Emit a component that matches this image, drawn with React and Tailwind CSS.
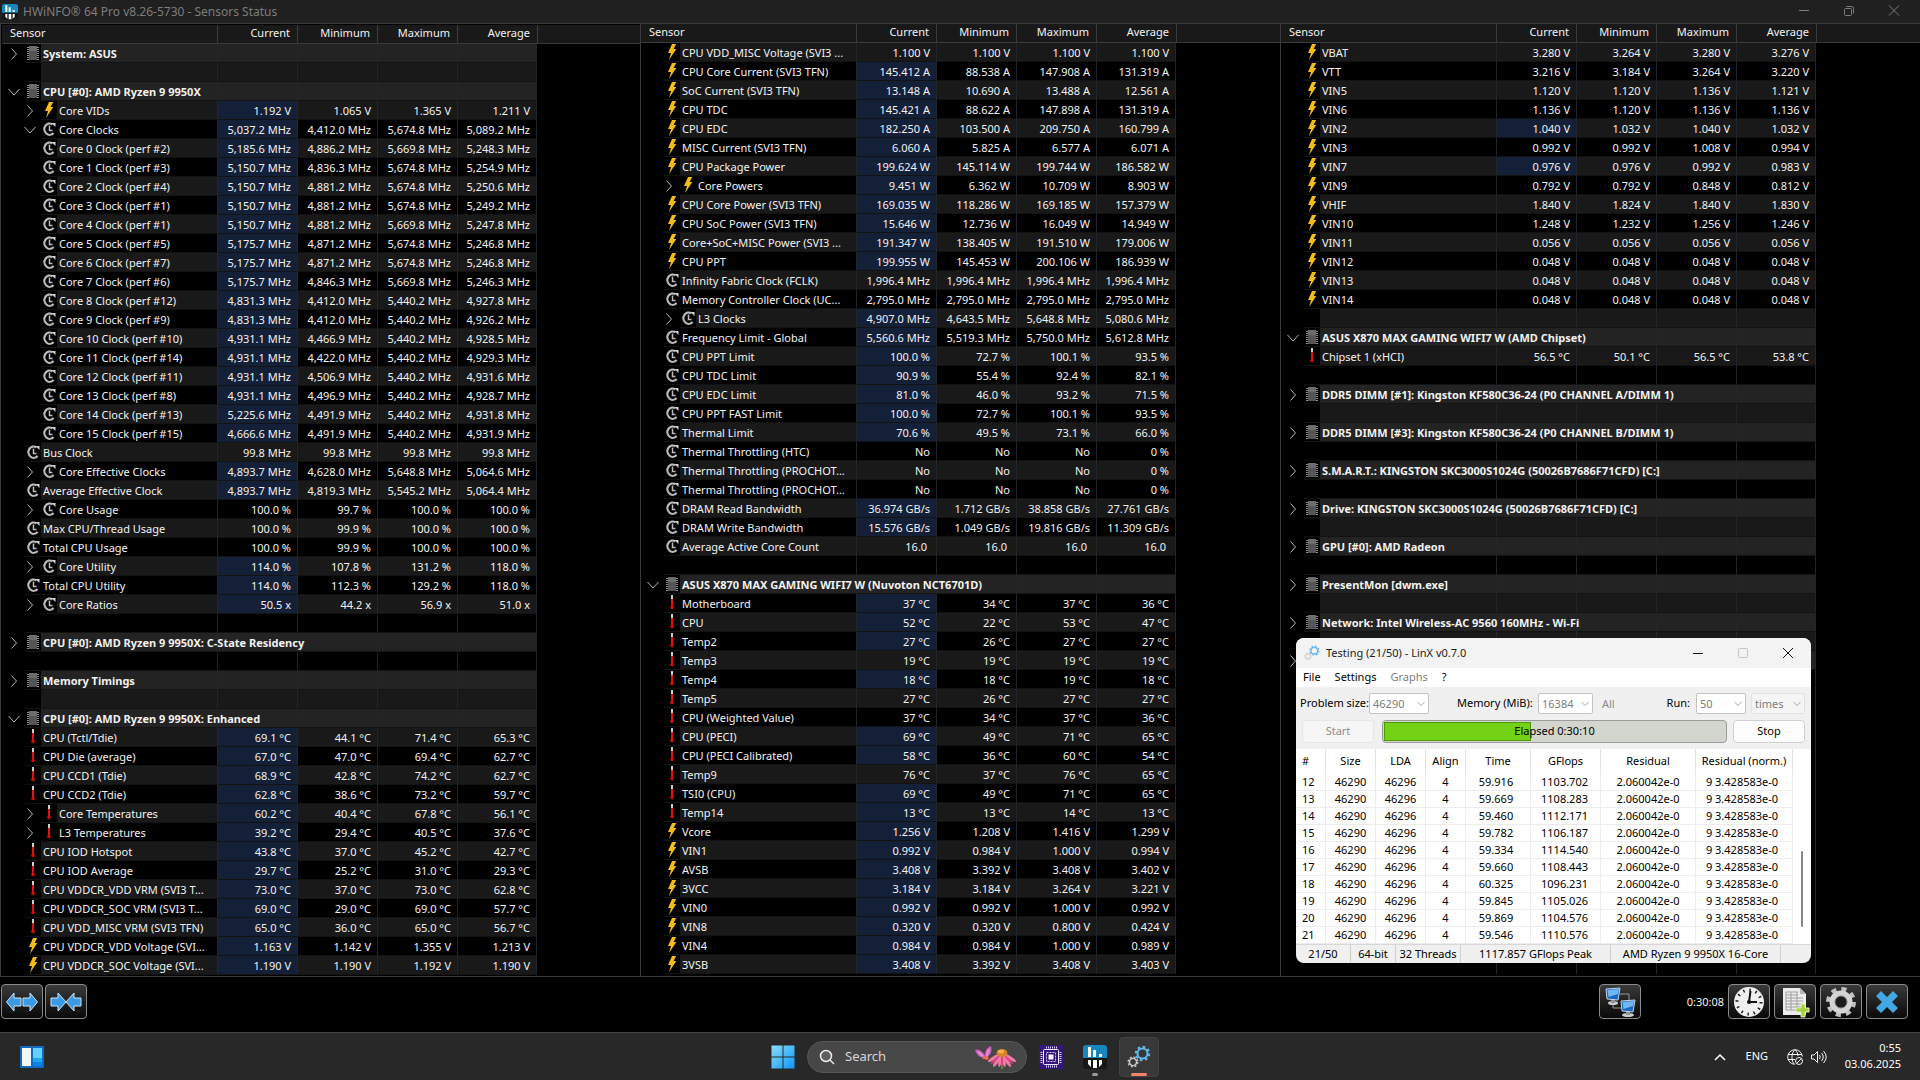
import { useState } from 'react';
import clsx from 'clsx';

// row: [icon, tree, highlighted, name, current, minimum, maximum, average]
// tree: '' leaf, '-' nested leaf, '>' closed group, 'v' open group
const LEFT = [
  { title: 'System: ASUS', gap: 'gray' },
  {
    title: 'CPU [#0]: AMD Ryzen 9 9950X',
    open: true,
    first: 'gray',
    gap: 'black',
    items: [
      ['volt', '>', 1, 'Core VIDs', '1.192 V', '1.065 V', '1.365 V', '1.211 V'],
      ['clock', 'v', 1, 'Core Clocks', '5,037.2 MHz', '4,412.0 MHz', '5,674.8 MHz', '5,089.2 MHz'],
      ['clock', '-', 1, 'Core 0 Clock (perf #2)', '5,185.6 MHz', '4,886.2 MHz', '5,669.8 MHz', '5,248.3 MHz'],
      ['clock', '-', 1, 'Core 1 Clock (perf #3)', '5,150.7 MHz', '4,836.3 MHz', '5,674.8 MHz', '5,254.9 MHz'],
      ['clock', '-', 1, 'Core 2 Clock (perf #4)', '5,150.7 MHz', '4,881.2 MHz', '5,674.8 MHz', '5,250.6 MHz'],
      ['clock', '-', 1, 'Core 3 Clock (perf #1)', '5,150.7 MHz', '4,881.2 MHz', '5,674.8 MHz', '5,249.2 MHz'],
      ['clock', '-', 1, 'Core 4 Clock (perf #1)', '5,150.7 MHz', '4,881.2 MHz', '5,669.8 MHz', '5,247.8 MHz'],
      ['clock', '-', 1, 'Core 5 Clock (perf #5)', '5,175.7 MHz', '4,871.2 MHz', '5,674.8 MHz', '5,246.8 MHz'],
      ['clock', '-', 1, 'Core 6 Clock (perf #7)', '5,175.7 MHz', '4,871.2 MHz', '5,674.8 MHz', '5,246.8 MHz'],
      ['clock', '-', 1, 'Core 7 Clock (perf #6)', '5,175.7 MHz', '4,846.3 MHz', '5,669.8 MHz', '5,246.3 MHz'],
      ['clock', '-', 1, 'Core 8 Clock (perf #12)', '4,831.3 MHz', '4,412.0 MHz', '5,440.2 MHz', '4,927.8 MHz'],
      ['clock', '-', 1, 'Core 9 Clock (perf #9)', '4,831.3 MHz', '4,412.0 MHz', '5,440.2 MHz', '4,926.2 MHz'],
      ['clock', '-', 1, 'Core 10 Clock (perf #10)', '4,931.1 MHz', '4,466.9 MHz', '5,440.2 MHz', '4,928.5 MHz'],
      ['clock', '-', 1, 'Core 11 Clock (perf #14)', '4,931.1 MHz', '4,422.0 MHz', '5,440.2 MHz', '4,929.3 MHz'],
      ['clock', '-', 1, 'Core 12 Clock (perf #11)', '4,931.1 MHz', '4,506.9 MHz', '5,440.2 MHz', '4,931.6 MHz'],
      ['clock', '-', 1, 'Core 13 Clock (perf #8)', '4,931.1 MHz', '4,496.9 MHz', '5,440.2 MHz', '4,928.7 MHz'],
      ['clock', '-', 1, 'Core 14 Clock (perf #13)', '5,225.6 MHz', '4,491.9 MHz', '5,440.2 MHz', '4,931.8 MHz'],
      ['clock', '-', 1, 'Core 15 Clock (perf #15)', '4,666.6 MHz', '4,491.9 MHz', '5,440.2 MHz', '4,931.9 MHz'],
      ['clock', '', 0, 'Bus Clock', '99.8 MHz', '99.8 MHz', '99.8 MHz', '99.8 MHz'],
      ['clock', '>', 1, 'Core Effective Clocks', '4,893.7 MHz', '4,628.0 MHz', '5,648.8 MHz', '5,064.6 MHz'],
      ['clock', '', 1, 'Average Effective Clock', '4,893.7 MHz', '4,819.3 MHz', '5,545.2 MHz', '5,064.4 MHz'],
      ['clock', '>', 0, 'Core Usage', '100.0 %', '99.7 %', '100.0 %', '100.0 %'],
      ['clock', '', 0, 'Max CPU/Thread Usage', '100.0 %', '99.9 %', '100.0 %', '100.0 %'],
      ['clock', '', 0, 'Total CPU Usage', '100.0 %', '99.9 %', '100.0 %', '100.0 %'],
      ['clock', '>', 1, 'Core Utility', '114.0 %', '107.8 %', '131.2 %', '118.0 %'],
      ['clock', '', 1, 'Total CPU Utility', '114.0 %', '112.3 %', '129.2 %', '118.0 %'],
      ['clock', '>', 1, 'Core Ratios', '50.5 x', '44.2 x', '56.9 x', '51.0 x'],
    ],
  },
  { title: 'CPU [#0]: AMD Ryzen 9 9950X: C-State Residency', gap: 'black' },
  { title: 'Memory Timings', gap: 'gray' },
  {
    title: 'CPU [#0]: AMD Ryzen 9 9950X: Enhanced',
    open: true,
    first: 'gray',
    items: [
      ['temp', '', 1, 'CPU (Tctl/Tdie)', '69.1 °C', '44.1 °C', '71.4 °C', '65.3 °C'],
      ['temp', '', 1, 'CPU Die (average)', '67.0 °C', '47.0 °C', '69.4 °C', '62.7 °C'],
      ['temp', '', 1, 'CPU CCD1 (Tdie)', '68.9 °C', '42.8 °C', '74.2 °C', '62.7 °C'],
      ['temp', '', 1, 'CPU CCD2 (Tdie)', '62.8 °C', '38.6 °C', '73.2 °C', '59.7 °C'],
      ['temp', '>', 1, 'Core Temperatures', '60.2 °C', '40.4 °C', '67.8 °C', '56.1 °C'],
      ['temp', '>', 1, 'L3 Temperatures', '39.2 °C', '29.4 °C', '40.5 °C', '37.6 °C'],
      ['temp', '', 1, 'CPU IOD Hotspot', '43.8 °C', '37.0 °C', '45.2 °C', '42.7 °C'],
      ['temp', '', 1, 'CPU IOD Average', '29.7 °C', '25.2 °C', '31.0 °C', '29.3 °C'],
      ['temp', '', 1, 'CPU VDDCR_VDD VRM (SVI3 T...', '73.0 °C', '37.0 °C', '73.0 °C', '62.8 °C'],
      ['temp', '', 1, 'CPU VDDCR_SOC VRM (SVI3 T...', '69.0 °C', '29.0 °C', '69.0 °C', '57.7 °C'],
      ['temp', '', 1, 'CPU VDD_MISC VRM (SVI3 TFN)', '65.0 °C', '36.0 °C', '65.0 °C', '56.7 °C'],
      ['volt', '', 1, 'CPU VDDCR_VDD Voltage (SVI...', '1.163 V', '1.142 V', '1.355 V', '1.213 V'],
      ['volt', '', 1, 'CPU VDDCR_SOC Voltage (SVI...', '1.190 V', '1.190 V', '1.192 V', '1.190 V'],
    ],
  },
];

const MIDDLE = [
  {
    first: 'gray',
    gap: 'black',
    items: [
      ['volt', '', 0, 'CPU VDD_MISC Voltage (SVI3 ...', '1.100 V', '1.100 V', '1.100 V', '1.100 V'],
      ['volt', '', 1, 'CPU Core Current (SVI3 TFN)', '145.412 A', '88.538 A', '147.908 A', '131.319 A'],
      ['volt', '', 1, 'SoC Current (SVI3 TFN)', '13.148 A', '10.690 A', '13.488 A', '12.561 A'],
      ['volt', '', 1, 'CPU TDC', '145.421 A', '88.622 A', '147.898 A', '131.319 A'],
      ['volt', '', 1, 'CPU EDC', '182.250 A', '103.500 A', '209.750 A', '160.799 A'],
      ['volt', '', 1, 'MISC Current (SVI3 TFN)', '6.060 A', '5.825 A', '6.577 A', '6.071 A'],
      ['volt', '', 1, 'CPU Package Power', '199.624 W', '145.114 W', '199.744 W', '186.582 W'],
      ['volt', '>', 1, 'Core Powers', '9.451 W', '6.362 W', '10.709 W', '8.903 W'],
      ['volt', '', 1, 'CPU Core Power (SVI3 TFN)', '169.035 W', '118.286 W', '169.185 W', '157.379 W'],
      ['volt', '', 1, 'CPU SoC Power (SVI3 TFN)', '15.646 W', '12.736 W', '16.049 W', '14.949 W'],
      ['volt', '', 1, 'Core+SoC+MISC Power (SVI3 ...', '191.347 W', '138.405 W', '191.510 W', '179.006 W'],
      ['volt', '', 1, 'CPU PPT', '199.955 W', '145.453 W', '200.106 W', '186.939 W'],
      ['clock', '', 0, 'Infinity Fabric Clock (FCLK)', '1,996.4 MHz', '1,996.4 MHz', '1,996.4 MHz', '1,996.4 MHz'],
      ['clock', '', 0, 'Memory Controller Clock (UC...', '2,795.0 MHz', '2,795.0 MHz', '2,795.0 MHz', '2,795.0 MHz'],
      ['clock', '>', 1, 'L3 Clocks', '4,907.0 MHz', '4,643.5 MHz', '5,648.8 MHz', '5,080.6 MHz'],
      ['clock', '', 1, 'Frequency Limit - Global', '5,560.6 MHz', '5,519.3 MHz', '5,750.0 MHz', '5,612.8 MHz'],
      ['clock', '', 1, 'CPU PPT Limit', '100.0 %', '72.7 %', '100.1 %', '93.5 %'],
      ['clock', '', 1, 'CPU TDC Limit', '90.9 %', '55.4 %', '92.4 %', '82.1 %'],
      ['clock', '', 1, 'CPU EDC Limit', '81.0 %', '46.0 %', '93.2 %', '71.5 %'],
      ['clock', '', 1, 'CPU PPT FAST Limit', '100.0 %', '72.7 %', '100.1 %', '93.5 %'],
      ['clock', '', 1, 'Thermal Limit', '70.6 %', '49.5 %', '73.1 %', '66.0 %'],
      ['clock', '', 0, 'Thermal Throttling (HTC)', 'No', 'No', 'No', '0 %'],
      ['clock', '', 0, 'Thermal Throttling (PROCHOT...', 'No', 'No', 'No', '0 %'],
      ['clock', '', 0, 'Thermal Throttling (PROCHOT...', 'No', 'No', 'No', '0 %'],
      ['clock', '', 1, 'DRAM Read Bandwidth', '36.974 GB/s', '1.712 GB/s', '38.858 GB/s', '27.761 GB/s'],
      ['clock', '', 1, 'DRAM Write Bandwidth', '15.576 GB/s', '1.049 GB/s', '19.816 GB/s', '11.309 GB/s'],
      ['clock', '', 0, 'Average Active Core Count', '16.0\u00a0', '16.0\u00a0', '16.0\u00a0', '16.0\u00a0'],
    ],
  },
  {
    title: 'ASUS X870 MAX GAMING WIFI7 W (Nuvoton NCT6701D)',
    open: true,
    first: 'black',
    items: [
      ['temp', '', 1, 'Motherboard', '37 °C', '34 °C', '37 °C', '36 °C'],
      ['temp', '', 1, 'CPU', '52 °C', '22 °C', '53 °C', '47 °C'],
      ['temp', '', 1, 'Temp2', '27 °C', '26 °C', '27 °C', '27 °C'],
      ['temp', '', 0, 'Temp3', '19 °C', '19 °C', '19 °C', '19 °C'],
      ['temp', '', 1, 'Temp4', '18 °C', '18 °C', '19 °C', '18 °C'],
      ['temp', '', 0, 'Temp5', '27 °C', '26 °C', '27 °C', '27 °C'],
      ['temp', '', 0, 'CPU (Weighted Value)', '37 °C', '34 °C', '37 °C', '36 °C'],
      ['temp', '', 1, 'CPU (PECI)', '69 °C', '49 °C', '71 °C', '65 °C'],
      ['temp', '', 1, 'CPU (PECI Calibrated)', '58 °C', '36 °C', '60 °C', '54 °C'],
      ['temp', '', 0, 'Temp9', '76 °C', '37 °C', '76 °C', '65 °C'],
      ['temp', '', 1, 'TSI0 (CPU)', '69 °C', '49 °C', '71 °C', '65 °C'],
      ['temp', '', 1, 'Temp14', '13 °C', '13 °C', '14 °C', '13 °C'],
      ['volt', '', 1, 'Vcore', '1.256 V', '1.208 V', '1.416 V', '1.299 V'],
      ['volt', '', 1, 'VIN1', '0.992 V', '0.984 V', '1.000 V', '0.994 V'],
      ['volt', '', 1, 'AVSB', '3.408 V', '3.392 V', '3.408 V', '3.402 V'],
      ['volt', '', 1, '3VCC', '3.184 V', '3.184 V', '3.264 V', '3.221 V'],
      ['volt', '', 1, 'VIN0', '0.992 V', '0.992 V', '1.000 V', '0.992 V'],
      ['volt', '', 1, 'VIN8', '0.320 V', '0.320 V', '0.800 V', '0.424 V'],
      ['volt', '', 1, 'VIN4', '0.984 V', '0.984 V', '1.000 V', '0.989 V'],
      ['volt', '', 1, '3VSB', '3.408 V', '3.392 V', '3.408 V', '3.403 V'],
    ],
  },
];

const RIGHT = [
  {
    first: 'gray',
    gap: 'gray',
    items: [
      ['volt', '', 0, 'VBAT', '3.280 V', '3.264 V', '3.280 V', '3.276 V'],
      ['volt', '', 0, 'VTT', '3.216 V', '3.184 V', '3.264 V', '3.220 V'],
      ['volt', '', 0, 'VIN5', '1.120 V', '1.120 V', '1.136 V', '1.121 V'],
      ['volt', '', 0, 'VIN6', '1.136 V', '1.120 V', '1.136 V', '1.136 V'],
      ['volt', '', 1, 'VIN2', '1.040 V', '1.032 V', '1.040 V', '1.032 V'],
      ['volt', '', 0, 'VIN3', '0.992 V', '0.992 V', '1.008 V', '0.994 V'],
      ['volt', '', 1, 'VIN7', '0.976 V', '0.976 V', '0.992 V', '0.983 V'],
      ['volt', '', 0, 'VIN9', '0.792 V', '0.792 V', '0.848 V', '0.812 V'],
      ['volt', '', 0, 'VHIF', '1.840 V', '1.824 V', '1.840 V', '1.830 V'],
      ['volt', '', 0, 'VIN10', '1.248 V', '1.232 V', '1.256 V', '1.246 V'],
      ['volt', '', 0, 'VIN11', '0.056 V', '0.056 V', '0.056 V', '0.056 V'],
      ['volt', '', 0, 'VIN12', '0.048 V', '0.048 V', '0.048 V', '0.048 V'],
      ['volt', '', 0, 'VIN13', '0.048 V', '0.048 V', '0.048 V', '0.048 V'],
      ['volt', '', 0, 'VIN14', '0.048 V', '0.048 V', '0.048 V', '0.048 V'],
    ],
  },
  {
    title: 'ASUS X870 MAX GAMING WIFI7 W (AMD Chipset)',
    open: true,
    first: 'gray',
    gap: 'black',
    items: [['temp', '', 0, 'Chipset 1 (xHCI)', '56.5 °C', '50.1 °C', '56.5 °C', '53.8 °C']],
  },
  { title: 'DDR5 DIMM [#1]: Kingston KF580C36-24 (P0 CHANNEL A/DIMM 1)', gap: 'gray' },
  { title: 'DDR5 DIMM [#3]: Kingston KF580C36-24 (P0 CHANNEL B/DIMM 1)', gap: 'black' },
  { title: 'S.M.A.R.T.: KINGSTON SKC3000S1024G (50026B7686F71CFD) [C:]', gap: 'black' },
  { title: 'Drive: KINGSTON SKC3000S1024G (50026B7686F71CFD) [C:]', gap: 'gray' },
  { title: 'GPU [#0]: AMD Radeon', gap: 'black' },
  { title: 'PresentMon [dwm.exe]', gap: 'gray' },
  { title: 'Network: Intel Wireless-AC 9560 160MHz - Wi-Fi', gap: 'gray' },
  { title: ' ' },
];

const RUNS = [
  [12, '59.916', '1103.702'],
  [13, '59.669', '1108.283'],
  [14, '59.460', '1112.171'],
  [15, '59.782', '1106.187'],
  [16, '59.334', '1114.540'],
  [17, '59.660', '1108.443'],
  [18, '60.325', '1096.231'],
  [19, '59.845', '1105.026'],
  [20, '59.869', '1104.576'],
  [21, '59.546', '1110.576'],
];

const SHADES = { gray: 'bg-[#191919]', black: 'bg-black', title: 'bg-[#232323]' };

function Chevron({ open, className }) {
  return (
    <svg className={clsx('w-4 h-4 shrink-0', className)} viewBox="0 0 16 16" fill="none" stroke="currentColor">
      {open ? <path d="M2.5 5l5.5 6 5.5-6" /> : <path d="M5.5 2.5l5 5.5-5 5.5" />}
    </svg>
  );
}

function SensorIcon({ type }) {
  if (type === 'volt') {
    return (
      <svg className="w-4 h-4" viewBox="0 0 16 16">
        <path d="M8 0h4.2L9.6 5h2.7L5 16l2-7H4z" fill="#f3bd17" />
      </svg>
    );
  }
  if (type === 'temp') {
    return (
      <svg className="w-4 h-4" viewBox="0 0 16 16">
        <rect x="7" y="0" width="2" height="5" fill="#cfcfcf" />
        <rect x="7" y="4" width="2" height="9" fill="#e01212" />
        <circle cx="8" cy="12.5" r="1.8" fill="#d30d0d" />
      </svg>
    );
  }
  if (type === 'clock') {
    return (
      <svg className="w-4 h-4" viewBox="0 0 16 16" fill="none" stroke="#bcbcbc">
        <path d="M11.5 3.4A5.3 5.6 0 1 0 12.6 12" strokeWidth="2.2" />
        <path d="M8.5 4.5v5h3" strokeWidth="1.5" />
        <path d="M10.5 2h4v4z" fill="#d4d4d4" stroke="none" />
      </svg>
    );
  }
  return (
    <svg className="w-4 h-4" viewBox="0 0 16 16">
      <path d="M3 2v13M13 2v13" stroke="#8c8c8c" strokeWidth="2" strokeDasharray="1 1" />
      <rect x="4" y="1" width="8" height="14" fill="#555" />
      <rect x="4" y="1" width="8" height="5" fill="#6c6c6c" />
    </svg>
  );
}

function HwinfoLogo({ className }) {
  return (
    <svg className={className} viewBox="0 0 24 24">
      <rect width="24" height="24" rx="3" fill="#171717" />
      <path d="M3 0h18a3 3 0 013 3v10H0V3a3 3 0 013-3z" fill="#1787bd" />
      <path d="M5 2h3v10H5zM10 5h3v7h-3zM16 9h3v3h-3z" fill="#fff" />
      <path d="M5 15h3v7l-3-3zM10 15h4v8h-4zM16 15h3v4l-3 3z" fill="#fff" />
    </svg>
  );
}

function Cog({ x, y, r, color }) {
  return (
    <g transform={`translate(${x} ${y})`} fill="none" stroke={color}>
      <circle r={r} strokeWidth={r * 0.4} />
      <circle r={r * 1.35} strokeWidth={r * 0.4} strokeDasharray={`${r * 0.53} ${r * 0.53}`} />
    </g>
  );
}

function LinxLogo({ className, back = '#c9c9c9' }) {
  return (
    <svg className={className} viewBox="0 0 24 24">
      <Cog x={15.5} y={8.5} r={5} color="#62b8ec" />
      <Cog x={6} y={17} r={3.6} color={back} />
    </svg>
  );
}

function NameCell({ icon, tree, name, shade, bold, open }) {
  const line = 'border-b border-[#131313]';
  return (
    <th scope="row" className={clsx('p-0 text-left', bold ? 'font-bold' : 'font-normal')}>
      <div className="flex h-[19px]">
        {bold && (
          <span className="w-[23px] flex items-center justify-center text-[#b8b8b8]">
            <Chevron open={open} />
          </span>
        )}
        {!bold && !tree && <span className="w-[23px]" />}
        {!bold && tree && (
          <span className="w-[39px] pl-5 flex items-center text-[#b8b8b8]">
            {tree !== '-' && <Chevron open={tree === 'v'} />}
          </span>
        )}
        <span className={clsx('w-4 shrink-0 flex items-center bg-black', line)}>
          {icon && <SensorIcon type={icon} />}
        </span>
        <span className={clsx('flex-1 min-w-0 pl-0.5 pt-px whitespace-nowrap leading-[17px]', line, shade)}>
          {name}
        </span>
      </div>
    </th>
  );
}

function SensorRow({ icon, tree, hot, name, values, shade, bold, open }) {
  return (
    <tr>
      <NameCell icon={icon} tree={tree} name={name} shade={shade} bold={bold} open={open} />
      {[0, 1, 2, 3].map((i) => (
        <td
          key={i}
          className={clsx(
            'h-[19px] p-0 pt-px pr-1.5 text-right whitespace-nowrap leading-[17px] border-b border-b-[#131313] border-l border-l-[#20262e]',
            hot && i === 0 ? 'bg-[#142038]' : shade,
            i === 3 && 'border-r border-r-[#20262e]'
          )}
        >
          {values?.[i]}
        </td>
      ))}
      <td className="p-0" />
    </tr>
  );
}

function SensorTable({ sections, fill = 0, className }) {
  return (
    <section className={clsx('border-l border-t border-[#3a3a3a] bg-black min-w-0', className)}>
      <table className="w-full table-fixed border-separate border-spacing-0 text-[11px] text-[#f2f2f2]">
        <colgroup>
          <col className="w-[215px]" />
          <col className="w-20" />
          <col className="w-20" />
          <col className="w-20" />
          <col className="w-20" />
          <col />
        </colgroup>
        <thead>
          <tr className="bg-[#191919] leading-4">
            <th className="p-0 pl-2 pb-0.5 text-left font-normal border-b border-[#3a3a3a]">Sensor</th>
            {['Current', 'Minimum', 'Maximum', 'Average'].map((h) => (
              <th key={h} className="p-0 pr-[7px] pb-0.5 text-right font-normal border-b border-l border-[#3a3a3a]">
                {h}
              </th>
            ))}
            <th className="p-0 border-b border-l border-[#3a3a3a]" />
          </tr>
        </thead>
        {sections.map((s, n) => (
          <tbody key={n}>
            {s.title && <SensorRow icon="chip" name={s.title} shade={SHADES.title} bold open={s.open} />}
            {s.items?.map(([icon, tree, hot, name, ...values], i) => (
              <SensorRow
                key={i}
                icon={icon}
                tree={tree}
                hot={hot}
                name={name}
                values={values}
                shade={(i % 2 === 0) === (s.first === 'gray') ? SHADES.gray : SHADES.black}
              />
            ))}
            {s.gap && <SensorRow name="" shade={SHADES[s.gap]} />}
          </tbody>
        ))}
        {fill > 0 && (
          <tbody>
            {Array.from({ length: fill }, (_, i) => (
              <tr key={i}>
                <td className="h-[19px] p-0" />
                {[0, 1, 2, 3].map((c) => (
                  <td key={c} className={clsx('p-0 border-l border-[#20262e]', c === 3 && 'border-r')} />
                ))}
              </tr>
            ))}
          </tbody>
        )}
      </table>
    </section>
  );
}

function Combo({ id, label, value, className, flat }) {
  return (
    <span className={clsx('relative h-[21px] shrink-0', className)}>
      <select
        id={id}
        aria-label={label}
        disabled
        defaultValue={value}
        className={clsx(
          'appearance-none w-full h-full pl-[3px] leading-[18px] rounded-xs border text-[#7d7d7d] opacity-100',
          flat ? 'bg-[#f5f5f5] border-[#e2e2e2]' : 'bg-white border-[#c4c4c4]'
        )}
      >
        <option>{value}</option>
      </select>
      <svg
        className="absolute right-1 top-[7px] w-2 h-2 pointer-events-none"
        viewBox="0 0 8 8"
        fill="none"
        stroke="#a5a5a5"
      >
        <path d="M0.5 2L4 5.5 7.5 2" />
      </svg>
    </span>
  );
}

function LinxWindow() {
  const cell = 'p-0 h-[17px] leading-4 border-b border-r border-[#ececec] text-center';
  return (
    <section className="absolute left-[1296px] top-[638px] w-[515px] flex flex-col rounded-lg overflow-hidden bg-[#f0f0f0] text-[11px] text-black">
      <header className="flex items-center h-[30px] bg-[#f3f3f3] pl-2 pr-px">
        <LinxLogo className="w-4 h-4" />
        <h2 className="pl-1.5 flex-1 text-[#1c1c1c]">Testing (21/50) - LinX v0.7.0</h2>
        <button aria-label="Minimize" className="w-[45px] flex justify-center">
          <svg className="w-3 h-3" viewBox="0 0 12 12" stroke="#111">
            <path d="M1 6.5h10" />
          </svg>
        </button>
        <button aria-label="Maximize" disabled className="w-[45px] flex justify-center">
          <svg className="w-3 h-3" viewBox="0 0 12 12" fill="none" stroke="#c4c4c4">
            <rect x="1.5" y="1.5" width="9" height="9" rx="1" />
          </svg>
        </button>
        <button aria-label="Close" className="w-[45px] flex justify-center">
          <svg className="w-3 h-3" viewBox="0 0 12 12" stroke="#111">
            <path d="M1 1l10 10M11 1L1 11" />
          </svg>
        </button>
      </header>

      <nav className="flex items-center h-[19px] gap-3.5 bg-white px-[7px]">
        <button>File</button>
        <button>Settings</button>
        <button disabled className="text-[#7d7d7d]">
          Graphs
        </button>
        <button>?</button>
      </nav>

      <form className="flex flex-col gap-1.5 pt-[6px] pb-[6px]">
        <div className="flex items-center pl-1 pr-1.5">
          <label htmlFor="size" className="w-[69px] whitespace-nowrap">
            Problem size:
          </label>
          <Combo id="size" value="46290" className="w-[60px]" />
          <label htmlFor="memory" className="ml-7 w-[81px] whitespace-nowrap">
            Memory (MiB):
          </label>
          <Combo id="memory" value="16384" className="w-[55px]" />
          <button type="button" disabled className="px-[9px] pt-0.5 text-[#8a8a8a]">
            All
          </button>
          <label htmlFor="runs" className="ml-auto pr-1.5">
            Run:
          </label>
          <Combo id="runs" value="50" className="w-[50px] mr-[5px]" />
          <Combo label="Run unit" value="times" className="w-[54px]" flat />
        </div>
        <div className="flex gap-1.5 px-1.5">
          <button
            type="button"
            disabled
            className="w-[72px] h-[23px] mr-0.5 rounded-sm border border-[#e6e6e6] bg-[#f6f6f6] text-[#8c8c8c]"
          >
            Start
          </button>
          <div className="relative flex-1 h-[23px] rounded-sm border border-[#9c9c9c] bg-[#d3d6cf] p-px">
            <div className="h-full w-[43%] bg-[#73d216] border border-[#4e9a06]" />
            <span className="absolute inset-0 flex items-center justify-center">Elapsed 0:30:10</span>
          </div>
          <button type="button" className="w-[72px] h-[23px] rounded-sm border border-[#d0d0d0] bg-[#fdfdfd]">
            Stop
          </button>
        </div>
      </form>

      <div className="flex bg-white">
        <table className="w-[497px] table-fixed border-separate border-spacing-0">
          <colgroup>
            <col className="w-[30px]" />
            <col className="w-[50px]" />
            <col className="w-[50px]" />
            <col className="w-[40px]" />
            <col className="w-[65px]" />
            <col className="w-[70px]" />
            <col className="w-[95px]" />
            <col />
          </colgroup>
          <thead>
            <tr>
              {['#', 'Size', 'LDA', 'Align', 'Time', 'GFlops', 'Residual', 'Residual (norm.)'].map((h, i) => (
                <th
                  key={h}
                  className={clsx(
                    'p-0 h-[25px] font-normal whitespace-nowrap border-r border-[#e2e2e2]',
                    i === 0 && 'text-left pl-1.5'
                  )}
                >
                  {h}
                </th>
              ))}
            </tr>
          </thead>
          <tbody>
            {RUNS.map(([n, time, gflops]) => (
              <tr key={n}>
                <td className="p-0 pl-1.5 h-[17px] leading-4 border-b border-r border-[#ececec]">{n}</td>
                <td className={cell}>46290</td>
                <td className={cell}>46296</td>
                <td className={cell}>4</td>
                <td className={clsx(cell, 'pr-1')}>{time}</td>
                <td className={clsx(cell, 'pr-0.5')}>{gflops}</td>
                <td className={cell}>2.060042e-0</td>
                <td className={clsx(cell, 'whitespace-nowrap pr-1')}>9 3.428583e-0</td>
              </tr>
            ))}
          </tbody>
        </table>
        <div className="flex-1 flex justify-center items-end pb-[17px] pr-px">
          <span className="w-0.5 h-[76px] rounded-full bg-[#858585]" />
        </div>
      </div>

      <footer className="flex h-[19px] border-t border-[#d8d8d8] leading-[18px] text-center whitespace-nowrap divide-x divide-[#cfcfcf]">
        <span className="w-[55px]">21/50</span>
        <span className="w-[45px]">64-bit</span>
        <span className="w-[65px]">32 Threads</span>
        <span className="w-[150px]">1117.857 GFlops Peak</span>
        <span className="w-[170px]">AMD Ryzen 9 9950X 16-Core</span>
        <span className="flex-1" />
      </footer>
    </section>
  );
}

function ToolButton({ label, children, className }) {
  return (
    <button
      aria-label={label}
      className={clsx(
        'w-[42px] h-[35px] rounded-sm border border-[#8a8a8a] bg-linear-to-b from-[#3a3a3a] to-[#0a0a0a] flex items-center justify-center',
        className
      )}
    >
      {children}
    </button>
  );
}

function Toolbar() {
  return (
    <div className="h-[55px] bg-black flex items-start gap-1 pt-[7px] pl-px pr-3 text-[#f2f2f2]">
      <div className="flex gap-0.5">
        <ToolButton label="Expand columns">
          <svg className="w-8 h-5 shrink-0" viewBox="0 0 32 20" fill="#3b9ae6" stroke="#cfe3f3" strokeWidth="1">
            <path d="M0.5 10L8 1v5h7v8H8v5zM31.5 10L24 1v5h-7v8h7v5z" />
          </svg>
        </ToolButton>
        <ToolButton label="Shrink columns">
          <svg className="w-8 h-5 shrink-0" viewBox="0 0 32 20" fill="#3b9ae6" stroke="#cfe3f3" strokeWidth="1">
            <path d="M16 10L8 1v5H1v8h7v5zM16 10l8-9v5h7v8h-7v5z" />
          </svg>
        </ToolButton>
      </div>

      <ToolButton label="Network" className="ml-auto">
        <svg className="w-8 h-8 shrink-0" viewBox="0 0 32 32">
          <path d="M16 8h9v7M9 17v5h8" fill="none" stroke="#9a9a9a" />
          <ellipse cx="9" cy="17" rx="5" ry="2" fill="#c9ccd0" />
          <path d="M7 13h4v4H7z" fill="#8f9499" />
          <path d="M2 3l14-1-2 12-11-1z" fill="#1767c4" stroke="#c8d4e0" />
          <path d="M3.5 4l11.5-1-1 5-9.5 3z" fill="#6fb6f2" />
          <ellipse cx="24" cy="29" rx="6" ry="2" fill="#c9ccd0" />
          <path d="M22 25h4v4h-4z" fill="#8f9499" />
          <path d="M17 15l14-1-2 12-11-1z" fill="#1767c4" stroke="#c8d4e0" />
          <path d="M18.5 16L30 15l-1 5-9.5 3z" fill="#6fb6f2" />
        </svg>
      </ToolButton>
      <span className="w-[79px] text-right text-[11px] leading-[35px]">0:30:08</span>
      <ToolButton label="Clock">
        <svg className="w-8 h-8 shrink-0" viewBox="0 0 32 32">
          <circle cx="16" cy="16" r="15" fill="#f0f0f0" />
          <circle cx="16" cy="16" r="12" fill="none" stroke="#222" strokeWidth="3" strokeDasharray="1.5 4.783" />
          <path d="M16 16L17.5 5M16 16h8" stroke="#111" strokeWidth="2" />
          <circle cx="16" cy="16" r="2" fill="#111" />
        </svg>
      </ToolButton>
      <ToolButton label="Save report">
        <svg className="w-8 h-8 shrink-0" viewBox="0 0 32 32">
          <path d="M4 2h17l6 6v21H4z" fill="#ececec" />
          <path d="M21 2v6h6z" fill="#b5b5b5" />
          <path
            d="M7 6h12M7 9h12M7 12h17M7 15h17M7 18h17M7 21h17M7 24h17M7 6v18M12 6v18M18 6v18"
            stroke="#9f9f9f"
            fill="none"
          />
          <path d="M22 18h4v4h4v4h-4v5h-4v-5h-5v-4h5z" fill="#a5cf3f" stroke="#e3f2b8" />
        </svg>
      </ToolButton>
      <ToolButton label="Settings">
        <svg className="w-8 h-8 shrink-0" viewBox="0 0 32 32" fill="none">
          <circle cx="16" cy="16" r="13" stroke="#bfc1c3" strokeWidth="4" strokeDasharray="5.1 5.11" />
          <circle cx="16" cy="16" r="8.5" stroke="#d2d4d6" strokeWidth="6" />
          <circle cx="16" cy="16" r="6" fill="#1c1c1c" stroke="#7a7a7a" />
        </svg>
      </ToolButton>
      <ToolButton label="Close sensors">
        <svg className="w-6 h-6 shrink-0" viewBox="0 0 24 24">
          <path d="M6 1l6 6 6-6 5 5-6 6 6 6-5 5-6-6-6 6-5-5 6-6-6-6z" fill="#42a7e3" />
        </svg>
      </ToolButton>
    </div>
  );
}

function Taskbar() {
  const [query, setQuery] = useState('');
  return (
    <footer className="h-12 bg-[#282828] border-t border-[#434343] grid grid-cols-[1fr_auto_1fr] items-center text-white">
      <button aria-label="Widgets" className="ml-5 w-6">
        <svg className="w-6 h-6" viewBox="0 0 24 24">
          <rect y="1" width="24" height="22" rx="1" fill="#0f6ac0" />
          <rect x="2" y="3" width="9" height="18" fill="#f4f6f8" />
          <rect x="13" y="3" width="9" height="10" fill="#62d2fb" />
          <rect x="13" y="13" width="9" height="4" fill="#1fa5f5" />
          <rect x="13" y="17" width="9" height="4" fill="#0a84e8" />
        </svg>
      </button>

      <div className="flex items-center gap-1 pl-0.5">
        <button aria-label="Start" className="w-10 h-10 flex items-center justify-center">
          <svg className="w-6 h-6" viewBox="0 0 24 24">
            <defs>
              <linearGradient id="win" x1="0" y1="0" x2="24" y2="24" gradientUnits="userSpaceOnUse">
                <stop offset="0" stopColor="#8ae0fc" />
                <stop offset="1" stopColor="#0c93f7" />
              </linearGradient>
            </defs>
            <path d="M0.5 0.5h11v11h-11zM12.5 0.5h11v11h-11zM0.5 12.5h11v11h-11zM12.5 12.5h11v11h-11z" fill="url(#win)" />
          </svg>
        </button>
        <label className="w-[220px] h-8 pl-[11px] pr-2 rounded-full bg-[#474747] border border-[#585858] flex items-center">
          <svg className="w-4 h-4 shrink-0" viewBox="0 0 16 16" fill="none" stroke="#ececec" strokeWidth="1.5">
            <circle cx="7" cy="7" r="5.5" fill="#5c5f62" />
            <path d="M11 11l4 4" />
          </svg>
          <input
            type="text"
            value={query}
            onChange={(e) => setQuery(e.target.value)}
            placeholder="Search"
            aria-label="Search"
            className="flex-1 min-w-0 pl-2.5 bg-transparent outline-none text-[13px] placeholder:text-[#d6d6d6]"
          />
          <svg className="w-11 h-6 shrink-0" viewBox="0 0 44 24">
            {/* butterfly */}
            <path d="M10 13Q3 12 1 5q4-2 10 5 0-7 6-9 2 6-3 11 0 3-4 1z" fill="#c45fb4" />
            <path d="M9 12Q4 10 3 6q4 0 7 5zM12 11q0-6 4-8 0 5-3 9z" fill="#e58bd0" />
            <path d="M10 12l3-1 2 2-2 2-3-1-2 0z" fill="#f0703f" />
            {/* coneflower */}
            <path d="M28 12v12" stroke="#5c9a35" strokeWidth="1.5" />
            <g fill="#ef7aa6">
              <ellipse cx="20" cy="13" rx="7" ry="1.8" transform="rotate(-32 20 13)" />
              <ellipse cx="36" cy="13" rx="7" ry="1.8" transform="rotate(32 36 13)" />
              <ellipse cx="23" cy="16" rx="7" ry="1.8" transform="rotate(-58 23 16)" />
              <ellipse cx="33" cy="16" rx="7" ry="1.8" transform="rotate(58 33 16)" />
              <ellipse cx="26" cy="16" rx="1.6" ry="6" transform="rotate(8 26 16)" />
              <ellipse cx="30" cy="16" rx="1.6" ry="6" transform="rotate(-8 30 16)" />
            </g>
            <g fill="#d8407f">
              <ellipse cx="21" cy="15" rx="6" ry="1" transform="rotate(-45 21 15)" />
              <ellipse cx="35" cy="15" rx="6" ry="1" transform="rotate(45 35 15)" />
              <ellipse cx="28" cy="16" rx="1" ry="5" />
            </g>
            <ellipse cx="28" cy="8" rx="5.5" ry="4" fill="#d9822b" />
            <ellipse cx="27" cy="6.5" rx="3" ry="1.8" fill="#f3b545" />
          </svg>
        </label>
        <button aria-label="CPU-Z" className="w-10 h-10 flex items-center justify-center">
          <svg className="w-6 h-6" viewBox="0 0 24 24" fill="none">
            <rect width="24" height="24" fill="#35157e" />
            <path d="M7 2.5h11M7 21.5h11M2.5 7v11M21.5 7v11" stroke="#d8cff0" strokeWidth="2" strokeDasharray="1 1" />
            <rect x="4.5" y="4.5" width="15" height="15" rx="1" stroke="#efeaff" />
            <rect x="7.5" y="7.5" width="9" height="9" stroke="#cfc3ee" strokeDasharray="2 1" />
            <rect x="9.5" y="9.5" width="5" height="5" fill="#fff" />
          </svg>
        </button>
        <button aria-label="HWiNFO" className="relative w-10 h-10 flex items-center justify-center">
          <HwinfoLogo className="w-6 h-6" />
          <span className="absolute bottom-px w-1.5 h-[3px] rounded-full bg-[#9b9b9b]" />
        </button>
        <button
          aria-label="LinX"
          className="relative w-10 h-10 rounded-sm border border-[#424242] bg-[#383838] flex items-center justify-center"
        >
          <LinxLogo className="w-6 h-6" />
          <span className="absolute bottom-0 w-4 h-[3px] rounded-full bg-[#f5806a]" />
        </button>
      </div>

      <div className="flex items-center justify-end pr-[19px] text-[11px]">
        <button aria-label="Show hidden icons" className="mr-5">
          <svg className="w-3 h-3" viewBox="0 0 12 12" fill="none" stroke="#fff" strokeWidth="1.5">
            <path d="M1 9l5-5 5 5" />
          </svg>
        </button>
        <button className="mr-[19px]">ENG</button>
        <svg className="w-4 h-4 mr-2" viewBox="0 0 16 16" fill="none" stroke="#f2f2f2">
          <path d="M15.3 7.5A7.3 7.3 0 1 0 7.5 15.3M1 5.5h14M1 10.5h7M8 0.7C4 4 4 12 7.5 15.3M8 0.7c2 2 3 4 3 6.3" />
          <circle cx="12" cy="12" r="3.5" />
          <path d="M9.5 14.5l5-5" />
        </svg>
        <svg className="w-4 h-4" viewBox="0 0 16 16" fill="none" stroke="#f2f2f2">
          <path d="M0.5 6v4h2.5l3.5 3.5v-11L3 6zM8.5 6q1.5 2 0 4M10.5 4q3.5 4 0 8M12.5 2q5.5 6 0 12" />
        </svg>
        <div className="w-[74px] pb-0.5 text-right leading-4">
          <div>0:55</div>
          <div>03.06.2025</div>
        </div>
      </div>
    </footer>
  );
}

function TitleBar() {
  return (
    <header className="h-[23px] bg-[#202020] flex items-center pl-0.5 pr-1 text-[#7d7d7d]">
      <HwinfoLogo className="w-4 h-4" />
      <h1 className="pl-[5px] flex-1 text-xs">HWiNFO® 64 Pro v8.26-5730 - Sensors Status</h1>
      <button aria-label="Minimize" className="w-[45px] pb-0.5 flex justify-center">
        <svg className="w-3 h-3" viewBox="0 0 12 12" stroke="currentColor">
          <path d="M1 5.5h10" />
        </svg>
      </button>
      <button aria-label="Restore" className="w-[45px] pb-0.5 flex justify-center">
        <svg className="w-3 h-3" viewBox="0 0 12 12" fill="none" stroke="currentColor">
          <rect x="1.5" y="3.5" width="7" height="7" rx="1" />
          <path d="M3.5 1.5h5a2 2 0 012 2v5" />
        </svg>
      </button>
      <button aria-label="Close" className="w-[45px] pb-0.5 flex justify-center">
        <svg className="w-3 h-3" viewBox="0 0 12 12" stroke="currentColor">
          <path d="M1 0.5l10 10M11 0.5l-10 10" />
        </svg>
      </button>
    </header>
  );
}

export default function App() {
  return (
    <div className="relative min-h-screen flex flex-col bg-black font-['Noto_Sans','Open_Sans',sans-serif]">
      <TitleBar />
      <main className="flex-1 grid grid-cols-3 border-b border-[#3a3a3a]">
        <SensorTable sections={LEFT} className="pl-px pt-px" />
        <SensorTable sections={MIDDLE} />
        <SensorTable sections={RIGHT} fill={16} />
      </main>
      <Toolbar />
      <Taskbar />
      <LinxWindow />
    </div>
  );
}
